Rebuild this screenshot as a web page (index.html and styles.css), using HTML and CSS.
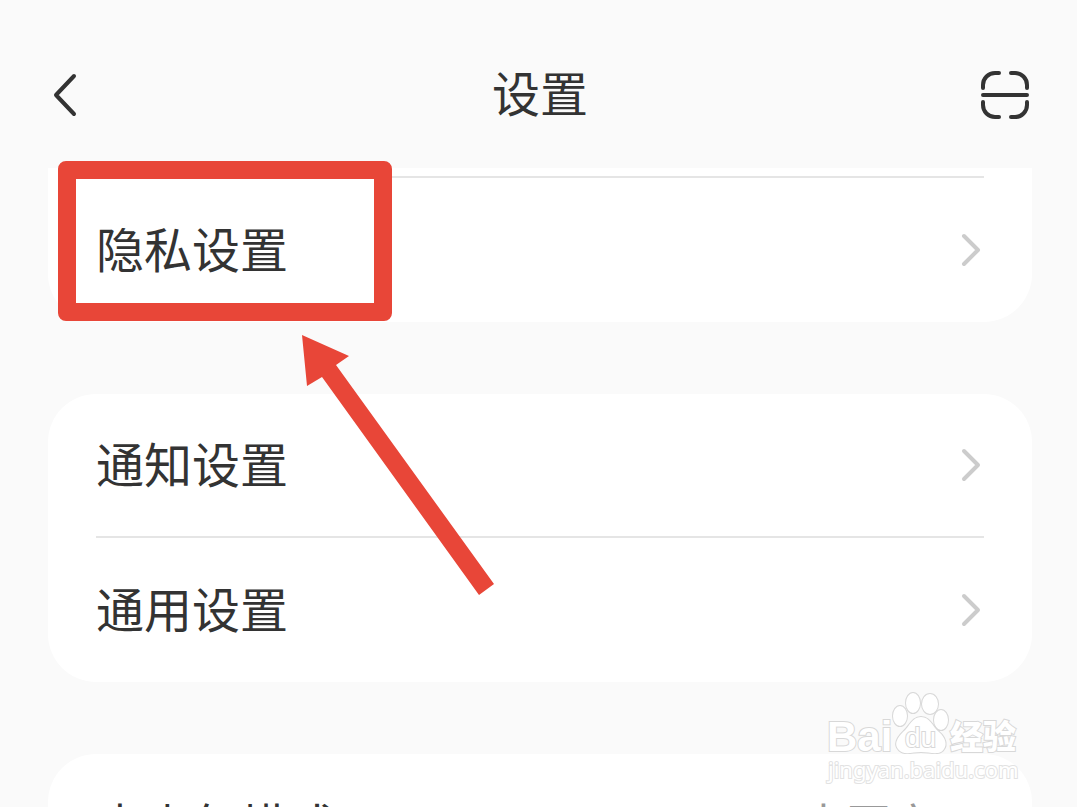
FILE: index.html
```
<!DOCTYPE html>
<html lang="zh-CN">
<head>
    <meta charset="UTF-8">
    <meta name="viewport" content="width=device-width, initial-scale=1.0">
    <title>设置</title>
    <link rel="stylesheet" href="styles.css">
</head>
<body>

    <header class="header">
        <button class="icon-btn" type="button" aria-label="返回">
            <svg width="48" height="48" viewBox="0 0 48 48">
                <path d="M26 5 L8 24 L26 43"/>
            </svg>
        </button>
        <h1>设置</h1>
        <button class="icon-btn" type="button" aria-label="扫一扫">
            <svg width="48" height="48" viewBox="0 0 48 48">
                <path d="M2 17V14A12 12 0 0 1 14 2H18M30 2H34A12 12 0 0 1 46 14V17M46 31V34A12 12 0 0 1 34 46H30M18 46H14A12 12 0 0 1 2 34V31M2 24H46"/>
            </svg>
        </button>
    </header>

    <main class="list">
        <!-- 隐私 -->
        <section class="card card-first">
            <a class="row" href="#privacy">
                <span class="label">隐私设置</span>
                <svg class="arrow" width="24" height="36" viewBox="0 0 24 36"><path d="M4 4L18 18L4 32"/></svg>
            </a>
        </section>

        <!-- 通知 / 通用 -->
        <section class="card">
            <a class="row" href="#notice">
                <span class="label">通知设置</span>
                <svg class="arrow" width="24" height="36" viewBox="0 0 24 36"><path d="M4 4L18 18L4 32"/></svg>
            </a>
            <a class="row" href="#general">
                <span class="label">通用设置</span>
                <svg class="arrow" width="24" height="36" viewBox="0 0 24 36"><path d="M4 4L18 18L4 32"/></svg>
            </a>
        </section>

        <!-- 青少年模式 -->
        <section class="card">
            <a class="row" href="#teen">
                <span class="label">青少年模式</span>
                <span class="value">未开启</span>
                <svg class="arrow" width="24" height="36" viewBox="0 0 24 36"><path d="M4 4L18 18L4 32"/></svg>
            </a>
        </section>
    </main>

    <!-- 标注 -->
    <div class="mark-box"></div>
    <svg class="mark-arrow" width="192" height="262" viewBox="0 0 192 262">
        <polygon points="0,0 47,21 34,30 192,249 177,260 20,42 5,51"/>
    </svg>

    <!-- 水印 -->
    <svg class="watermark" width="200" height="100" viewBox="0 0 200 100">
        <text class="wm-logo" x="3" y="60">Bai</text>
        <g class="wm-paw">
            <ellipse cx="76" cy="25" rx="7" ry="10"/>
            <ellipse cx="89" cy="12" rx="7" ry="10"/>
            <ellipse cx="106" cy="13" rx="8" ry="10"/>
            <ellipse cx="117" cy="29" rx="7" ry="10"/>
            <path d="M97 26C106 26 108 35 115 41C122 47 123 54 120 58C116 65 106 61 97 61C88 61 79 65 74 58C70 53 73 47 79 41C86 35 88 26 97 26Z"/>
        </g>
        <text class="wm-du" x="81" y="56">du</text>
        <text class="wm-cn" x="126" y="58">经验</text>
        <text class="wm-url" x="4" y="87">jingyan.baidu.com</text>
    </svg>

</body>
</html>
```
FILE: styles.css
```
/* 全局样式 */
* {
    box-sizing: border-box;
}

body {
    font-family: "Noto Sans CJK SC", sans-serif;
    background-color: #fafafa;
    color: #333;
    margin: 0;
    height: 100vh;
    overflow: hidden;
    position: relative;
}

/* 顶部栏 */
.header {
    display: flex;
    justify-content: space-between;
    align-items: center;
    height: 168px;
    padding: 22px 45px 0 48px;
}

h1 {
    font-size: 48px;
    font-weight: 400;
    line-height: 72px;
    margin: 0;
    padding-bottom: 8px;
}

.icon-btn {
    display: flex;
    width: 51px;
    padding: 0;
    border: none;
    background: none;
    cursor: pointer;
}

.icon-btn path {
    fill: none;
    stroke: #333;
    stroke-width: 4px;
    stroke-linecap: round;
    stroke-linejoin: round;
}

/* 设置列表 */
.list {
    display: flex;
    flex-direction: column;
    gap: 72px;
    padding: 0 45px 0 48px;
}

.card {
    background: white;
    border-radius: 48px;
    padding: 0 48px;
}

.card-first {
    border-radius: 0 0 48px 48px;
    padding-top: 8px;
}

.row {
    display: flex;
    align-items: center;
    height: 144px;
    font-size: 48px;
    line-height: 72px;
    color: #333;
    text-decoration: none;
}

.card-first .row {
    height: 146px;
    border-top: 2px solid #e5e5e5;
}

.row:not(:last-child) {
    border-bottom: 2px solid #e5e5e5;
}

.label,
.value {
    padding-bottom: 6px;
}

.value {
    margin-left: auto;
    margin-right: 24px;
    font-size: 45px;
    color: #999;
}

.arrow {
    fill: none;
    stroke: #ccc;
    stroke-width: 4px;
    stroke-linecap: round;
    stroke-linejoin: round;
    margin-left: auto;
}

.value + .arrow {
    margin-left: 0;
}

/* 红色标注 */
.mark-box {
    position: absolute;
    left: 58px;
    top: 161px;
    width: 334px;
    height: 160px;
    border: 18px solid #e84638;
    border-radius: 8px;
    pointer-events: none;
}

.mark-arrow {
    position: absolute;
    left: 302px;
    top: 335px;
    fill: #e84638;
    pointer-events: none;
}

/* 水印 */
.watermark {
    position: absolute;
    right: 53px;
    bottom: 16px;
    fill: white;
    stroke: #d8d8d8;
    stroke-width: 2px;
    paint-order: stroke;
    pointer-events: none;
}

.wm-logo {
    font-family: "Liberation Sans", sans-serif;
    font-size: 42px;
    font-weight: 700;
}

.wm-du {
    font-family: "Liberation Sans", sans-serif;
    font-size: 28px;
}

.wm-cn {
    font-size: 33px;
    font-weight: 900;
}

.wm-url {
    font-family: "Noto Sans", sans-serif;
    font-size: 22px;
    stroke: #e2e2e2;
}
```
